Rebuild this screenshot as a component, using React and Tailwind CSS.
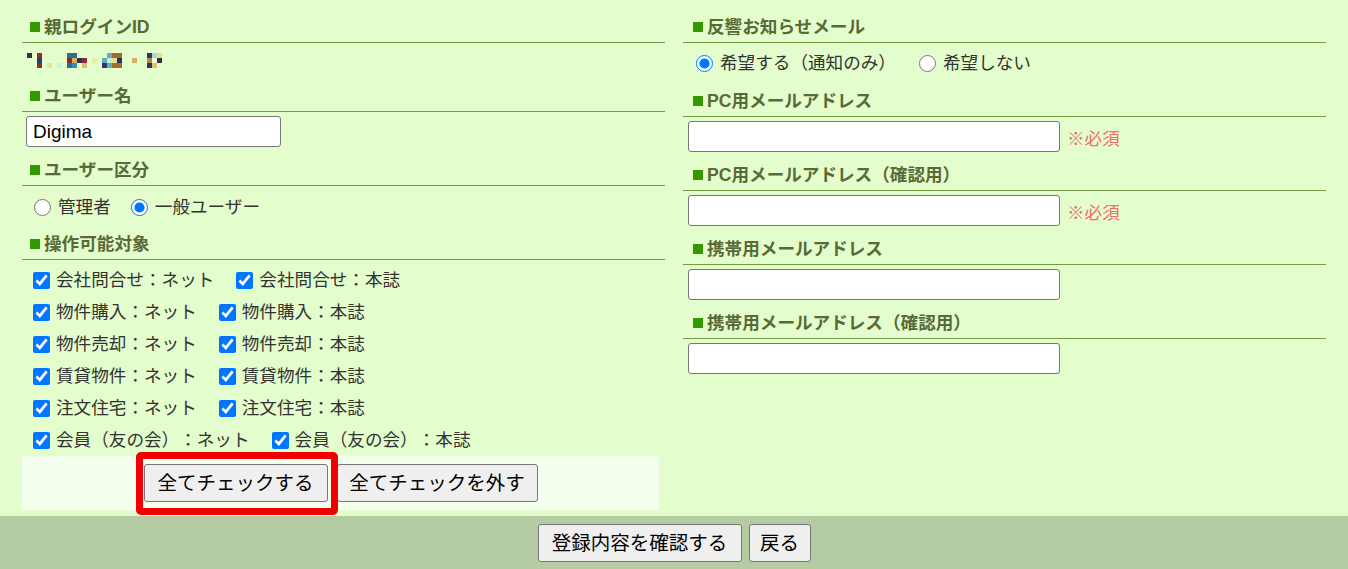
import { useState } from 'react';

const font = "font-['Liberation_Sans','Noto_Sans_CJK_JP',sans-serif]";

// mosaic cells of the blurred login id: [col, row, colour]
const mosaic = [
  [0, 0, '#333333'], [2, 0, '#8b3030'], [3, 0, '#eef6cc'], [8, 0, '#336b8b'], [9, 0, '#336b8b'],
  [10, 0, '#eef7c8'], [16, 0, '#66aabb'], [17, 0, '#a06a30'], [18, 0, '#a06a30'], [21, 0, '#eef5cf'],
  [24, 0, '#2e3560'], [25, 0, '#a0e0c8'], [26, 0, '#e0e090'],
  [2, 1, '#2e3a78'], [8, 1, '#8b3030'], [9, 1, '#d4b060'], [10, 1, '#2e3060'], [11, 1, '#8b3030'],
  [13, 1, '#e0f0a0'], [15, 1, '#66aabb'], [16, 1, '#c0f0d0'], [17, 1, '#e0e090'], [18, 1, '#2e3060'],
  [21, 1, '#d4b060'], [24, 1, '#b08a40'], [25, 1, '#f0f8d8'], [26, 1, '#333333'],
  [2, 2, '#8b3030'], [4, 2, '#e8e4a0'], [6, 2, '#c0f8d8'], [8, 2, '#336b8b'], [9, 2, '#3390b0'],
  [11, 2, '#e0c070'], [15, 2, '#2e3570'], [16, 2, '#66aabb'], [17, 2, '#a06a30'], [18, 2, '#a06a30'],
  [21, 2, '#eef5cf'], [24, 2, '#2e3560'], [25, 2, '#e0c070'],
];

const targets = [
  ['会社問合せ：ネット', '会社問合せ：本誌'],
  ['物件購入：ネット', '物件購入：本誌'],
  ['物件売却：ネット', '物件売却：本誌'],
  ['賃貸物件：ネット', '賃貸物件：本誌'],
  ['注文住宅：ネット', '注文住宅：本誌'],
  ['会員（友の会）：ネット', '会員（友の会）：本誌'],
];

function Heading({ children, pl = 'pl-[8px]' }) {
  return (
    <div className={`flex h-[38px] items-end border-b border-[#779944] pb-[3px] ${pl}`}>
      <div className="flex items-center text-[17.6px] leading-[24px] font-bold text-[#596a36]">
        <span className="mr-[4px] inline-block h-[10px] w-[10px] bg-[#339900]" />
        {children}
      </div>
    </div>
  );
}

function Radio({ checked, name, label }) {
  return (
    <label className="flex items-center">
      <input type="radio" name={name} defaultChecked={checked} className="m-0 h-[17px] w-[17px] accent-[#0075ff]" />
      <span className="ml-[7px]">{label}</span>
    </label>
  );
}

function MailField({ label, required }) {
  return (
    <div>
      <Heading pl="pl-[10px]">{label}</Heading>
      <div className="flex h-[36px] items-start pl-[5px] pt-[4px]">
        <input type="text" className="h-[31px] w-[372px] rounded-[3px] border border-[#767676] bg-white px-[4px]" />
        {required && <span className="ml-[7px] self-center pt-[3px] text-[#f26c6c]">※必須</span>}
      </div>
    </div>
  );
}

export default function App() {
  const [all, setAll] = useState(true);

  return (
    <div className={`${font} min-h-[569px] bg-[#e3fdcc] text-[17.6px] leading-[24px] text-[#333] [text-spacing-trim:space-all]`}>
      <div className="flex h-[516px] items-start gap-[18px] px-[22px] pt-[5px]">
        {/* left column */}
        <div className="flex-1">
          <Heading>親ログインID</Heading>
          <div className="h-[31px] pl-[5px] pt-[10px]">
            <svg width="135" height="15" viewBox="0 0 135 15">
              {mosaic.map(([c, r, fill], i) => (
                <rect key={i} x={c * 5} y={r * 5} width="5" height="5" fill={fill} />
              ))}
            </svg>
          </div>

          <Heading>ユーザー名</Heading>
          <div className="h-[36px] pl-[4px] pt-[4px]">
            <input
              type="text"
              defaultValue="Digima"
              className="h-[31px] w-[255px] rounded-[3px] border border-[#767676] bg-white px-[6px] text-[19px] text-black"
            />
          </div>

          <Heading>ユーザー区分</Heading>
          <div className="flex h-[36px] items-center gap-[20px] pl-[12px] pt-[6px]">
            <Radio name="kind" label="管理者" />
            <Radio name="kind" label="一般ユーザー" checked />
          </div>

          <Heading>操作可能対象</Heading>
          <div className="pl-[11px] pt-[4px]">
            {targets.map((row) => (
              <div key={row[0]} className="flex h-[32px] items-center gap-[22px]">
                {row.map((label) => (
                  <label key={label} className="flex items-center">
                    <input
                      type="checkbox"
                      checked={all}
                      onChange={() => {}}
                      className="m-0 h-[17px] w-[17px] accent-[#0075ff]"
                    />
                    <span className="ml-[6px]">{label}</span>
                  </label>
                ))}
              </div>
            ))}
          </div>

          <div className="flex h-[54px] w-[637px] items-center justify-center gap-[9px] bg-[#f5ffee] text-[19.5px] text-black">
            <div className="relative">
              <button
                onClick={() => setAll(true)}
                className="flex h-[38px] w-[184px] items-center justify-center rounded-[3px] border border-[#767676] bg-[#efefef]"
              >
                全てチェックする
              </button>
              <div className="pointer-events-none absolute -top-[12px] -right-[10px] -bottom-[13px] -left-[8px] rounded-[5px] border-[7px] border-[#f00000]" />
            </div>
            <button
              onClick={() => setAll(false)}
              className="flex h-[38px] w-[201px] items-center justify-center rounded-[3px] border border-[#767676] bg-[#efefef]"
            >
              全てチェックを外す
            </button>
          </div>
        </div>

        {/* right column */}
        <div className="flex-1">
          <Heading pl="pl-[10px]">反響お知らせメール</Heading>
          <div className="flex h-[36px] items-center gap-[23px] pl-[13px] pt-[4px]">
            <Radio name="notice" label="希望する（通知のみ）" checked />
            <Radio name="notice" label="希望しない" />
          </div>
          <MailField label="PC用メールアドレス" required />
          <MailField label="PC用メールアドレス（確認用）" required />
          <MailField label="携帯用メールアドレス" />
          <MailField label="携帯用メールアドレス（確認用）" />
        </div>
      </div>

      <div className="flex h-[53px] items-center justify-center gap-[7px] bg-[#b5cba3] text-[19.5px] text-black">
        <button className="flex h-[38px] w-[204px] items-center justify-center rounded-[3px] border border-[#767676] bg-[#efefef]">
          登録内容を確認する
        </button>
        <button className="flex h-[38px] w-[62px] items-center justify-center rounded-[3px] border border-[#767676] bg-[#efefef]">
          戻る
        </button>
      </div>
    </div>
  );
}
